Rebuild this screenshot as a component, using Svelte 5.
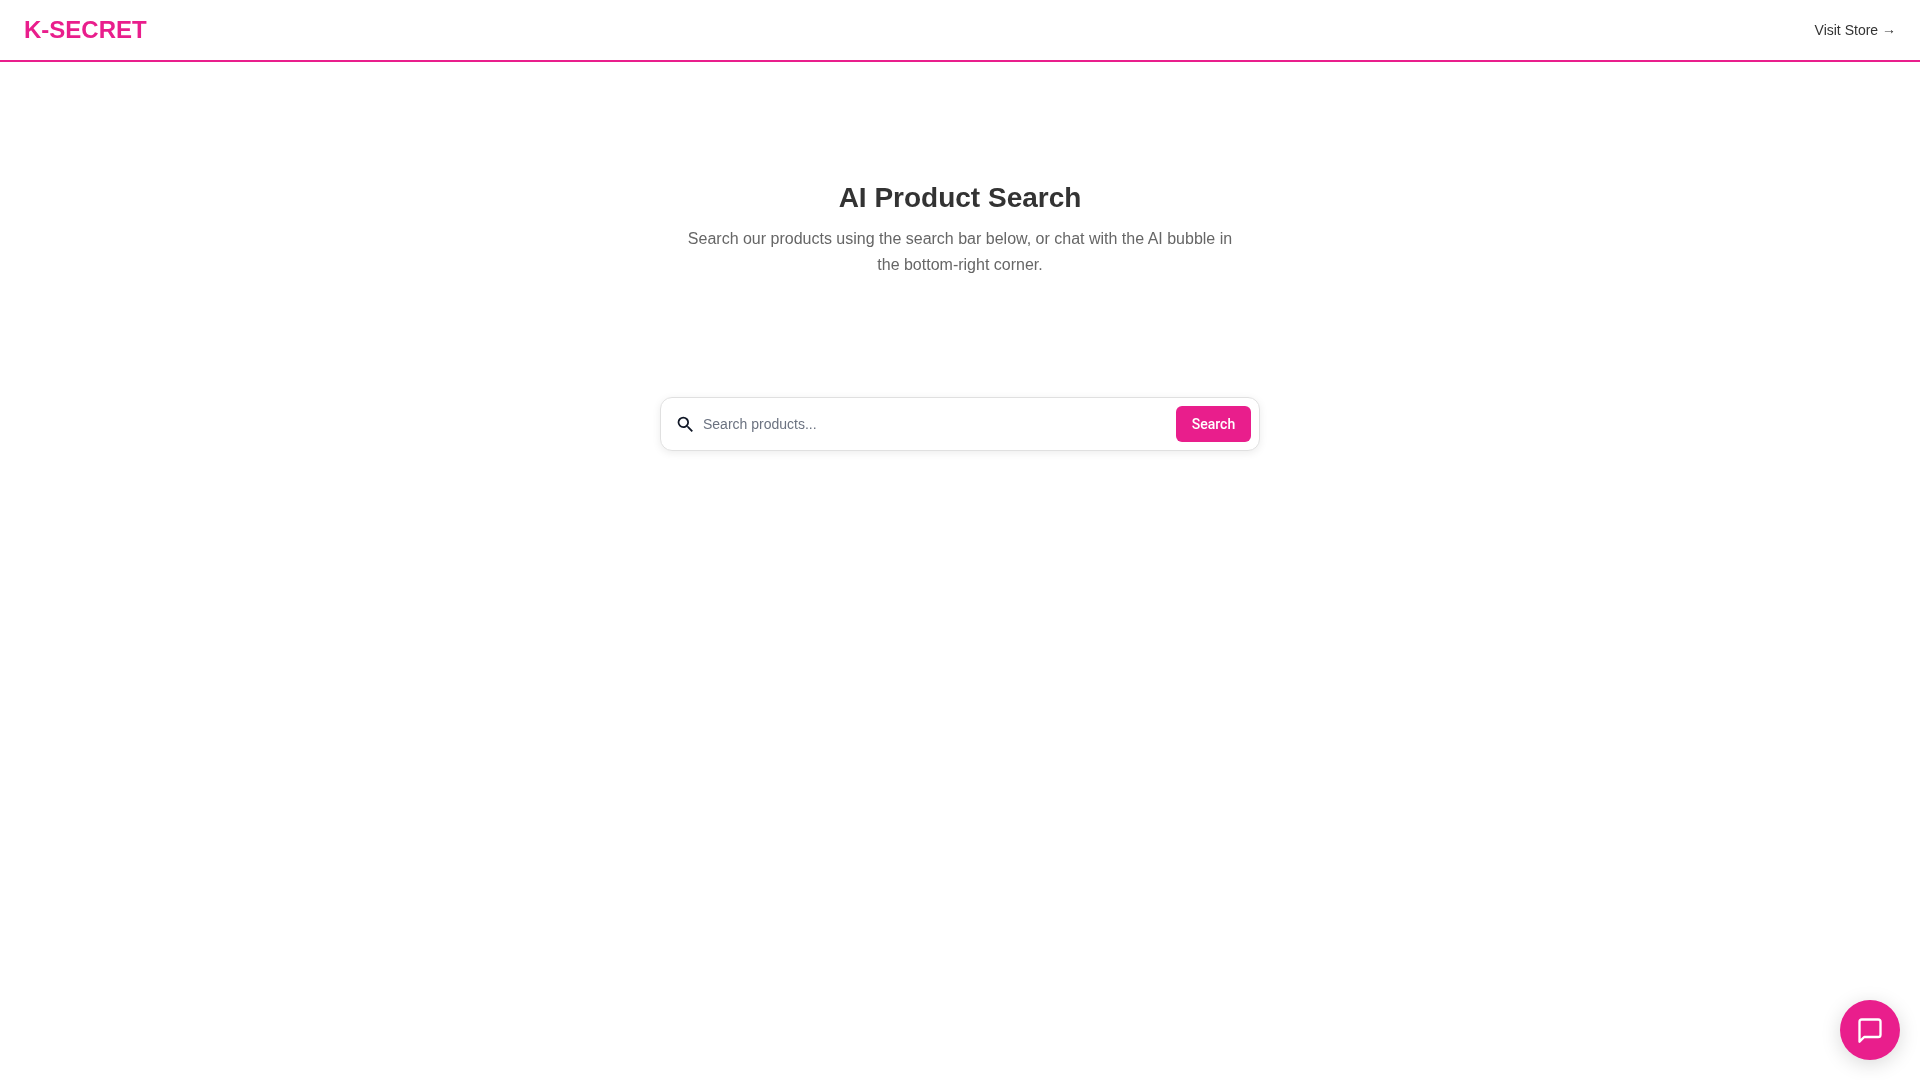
<script>
  let query = $state('');
</script>

<div class="page">
  <header class="topbar">
    <div class="logo">K-SECRET</div>
    <a class="store-link" href="#store">Visit Store <span class="arrow">→</span></a>
  </header>

  <main class="content">
    <section class="intro">
      <h1>AI Product Search</h1>
      <p>Search our products using the search bar below, or chat with the AI bubble in the bottom-right corner.</p>
    </section>

    <form class="search-box" onsubmit={(e) => e.preventDefault()}>
      <svg class="search-icon" viewBox="0 0 24 24" width="21" height="21" aria-hidden="true">
        <path fill="#111827" d="M15.5 14h-.79l-.28-.27A6.47 6.47 0 0 0 16 9.5 6.5 6.5 0 1 0 9.5 16c1.61 0 3.09-.59 4.23-1.57l.27.28v.79l5 4.99L20.49 19l-4.99-5zm-6 0C7.01 14 5 11.99 5 9.5S7.01 5 9.5 5 14 7.01 14 9.5 11.99 14 9.5 14z"/>
      </svg>
      <input type="text" placeholder="Search products..." bind:value={query} />
      <button type="submit">Search</button>
    </form>
  </main>

  <button class="chat-bubble" aria-label="Open chat">
    <svg viewBox="0 0 24 24" width="28" height="28" fill="none" stroke="#fff" stroke-width="2" stroke-linecap="round" stroke-linejoin="round">
      <path d="M3 5a2 2 0 0 1 2-2h14a2 2 0 0 1 2 2v11a2 2 0 0 1-2 2H7l-4 4z"/>
    </svg>
  </button>
</div>

<style>
  :global(body) {
    background: #fff;
    font-family: "Liberation Sans", Arial, sans-serif;
  }

  .page {
    min-height: 1080px;
    will-change: transform;
  }

  .topbar {
    display: flex;
    justify-content: space-between;
    align-items: center;
    height: 60px;
    padding: 0 24px;
    border-bottom: 2px solid #e91e8c;
  }

  .logo {
    font-size: 24px;
    font-weight: 700;
    color: #e91e8c;
  }

  .store-link {
    padding-bottom: 2px;
    font-size: 14px;
    line-height: 20px;
    color: #333;
    text-decoration: none;
  }

  .arrow {
    vertical-align: 1px;
  }

  .content {
    display: flex;
    flex-direction: column;
    align-items: center;
  }

  .intro {
    width: 600px;
    padding-top: 120px;
    text-align: center;
  }

  h1 {
    margin: 0 0 12px;
    font-size: 28px;
    line-height: 32px;
    font-weight: 700;
    color: #333;
  }

  p {
    margin: 0;
    padding: 0 20px;
    font-size: 16px;
    line-height: 26px;
    color: #666;
  }

  .search-box {
    display: flex;
    align-items: center;
    gap: 7px;
    box-sizing: border-box;
    width: 600px;
    height: 54px;
    margin-top: 119px;
    padding: 7px 8px 7px 14px;
    background: #fff;
    border: 1px solid #e0e0e0;
    border-radius: 12px;
    box-shadow: 0 2px 8px rgba(0, 0, 0, 0.08);
  }

  .search-icon {
    flex: none;
  }

  input {
    flex: 1;
    min-width: 0;
    border: none;
    outline: none;
    padding: 0;
    font-family: "Liberation Sans", Arial, sans-serif;
    font-size: 14px;
    color: #333;
    background: transparent;
  }

  input::placeholder {
    color: #6b7280;
  }

  button[type="submit"] {
    width: 75px;
    height: 36px;
    border: none;
    border-radius: 6px;
    background: #e91e8c;
    color: #fff;
    font-family: Roboto, sans-serif;
    font-size: 14px;
    font-weight: 500;
  }

  .chat-bubble {
    position: fixed;
    right: 20px;
    bottom: 20px;
    display: flex;
    align-items: center;
    justify-content: center;
    width: 60px;
    height: 60px;
    padding: 0;
    border: none;
    border-radius: 50%;
    background: #e91e8c;
    box-shadow: 0 4px 20px rgba(0, 0, 0, 0.15);
  }
</style>
